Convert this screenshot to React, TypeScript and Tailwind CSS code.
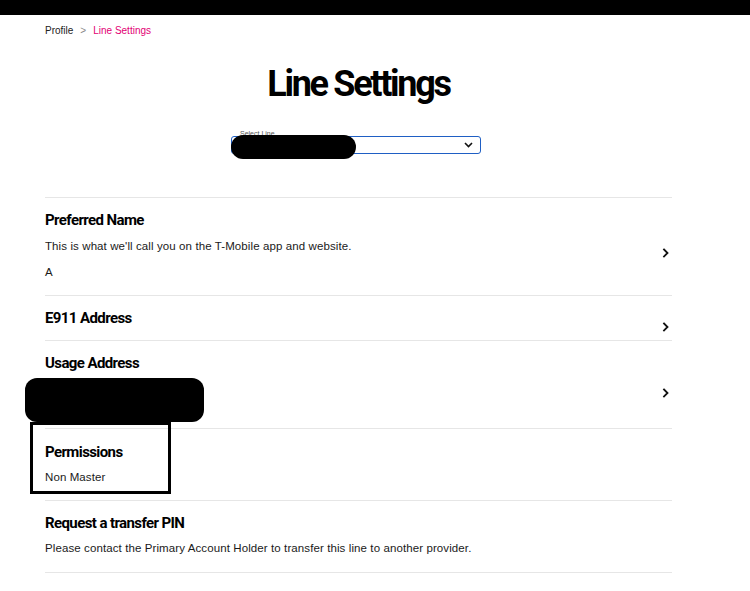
import React from 'react';

const heading = "font-['Roboto',sans-serif] text-[15px] font-bold leading-[20px] tracking-[-0.6px] text-black";
const body = "font-['Liberation_Sans',Arial,sans-serif] text-[11.5px] leading-[16px] tracking-[0.1px] text-[#1a1a1a]";

function Chevron() {
  return (
    <svg width="8" height="10" viewBox="0 0 8 10" fill="none">
      <path d="M2 1.5 L5.5 5 L2 8.5" stroke="#111" strokeWidth="1.8" strokeLinecap="square" />
    </svg>
  );
}

function Row({ children, chevron, className }: { children: React.ReactNode; chevron?: boolean; className: string }) {
  return (
    <div className={`flex items-center justify-between border-t border-[#e6e6e6] ${className}`}>
      <div>{children}</div>
      {chevron && (
        <div className="pt-[17px] pr-[2px]">
          <Chevron />
        </div>
      )}
    </div>
  );
}

export default function App() {
  return (
    <div className="min-h-[591px] bg-white">
      <div className="h-[15px] bg-black" />
      <div className="ml-[45px] w-[627px]">
        <nav className="mt-[9px] flex items-center gap-[7px] font-['Liberation_Sans',Arial,sans-serif] text-[10px] leading-[13px]">
          <span className="text-[#222]">Profile</span>
          <span className="text-[#888]">&gt;</span>
          <span className="text-[#e20074]">Line Settings</span>
        </nav>

        <h1 className="mt-[27px] text-center font-['Roboto',sans-serif] text-[36px] font-bold leading-[40px] tracking-[-2.3px] text-black">
          Line Settings
        </h1>

        <div className="mt-[26px] flex justify-center pr-[5px]">
          <div className="relative w-[250px]">
            <div className="pl-[9px] font-['Liberation_Sans',Arial,sans-serif] text-[7px] leading-[8px] text-[#555]">
              Select Line
            </div>
            <div className="mt-[-2px] flex h-[18px] items-center justify-end rounded-[3px] border-[1.5px] border-[#1f5fc4] pr-[7px]">
              <svg width="9" height="6" viewBox="0 0 9 6" fill="none">
                <path d="M1 1 L4.5 4.5 L8 1" stroke="#111" strokeWidth="1.6" />
              </svg>
            </div>
            <div className="absolute left-0 top-[5px] h-[24px] w-[125px] rounded-full bg-black" />
          </div>
        </div>

        <div className="mt-[43px]">
          <Row chevron className="h-[98px] pb-[4px]">
            <h2 className={heading}>Preferred Name</h2>
            <p className={`${body} mt-[8px]`}>This is what we'll call you on the T-Mobile app and website.</p>
            <p className={`${body} mt-[10px]`}>A</p>
          </Row>

          <Row chevron className="h-[45px]">
            <h2 className={heading}>E911 Address</h2>
          </Row>

          <Row chevron className="h-[88px]">
            <div className="pt-[6px]">
              <h2 className={heading}>Usage Address</h2>
              <div className="ml-[-20px] mt-[5px] h-[44px] w-[179px] rounded-[12px] bg-black" />
            </div>
          </Row>

          <div className="relative flex h-[72px] flex-col justify-center border-t border-[#e6e6e6]">
            <h2 className={`${heading} mt-[-3px]`}>Permissions</h2>
            <p className={`${body} mt-[7px]`}>Non Master</p>
            <div className="absolute left-[-15px] top-[-7px] h-[72px] w-[141px] border-[3px] border-black" />
          </div>

          <div className="flex h-[72px] flex-col justify-center border-t border-[#e6e6e6]">
            <h2 className={`${heading} mt-[-4px]`}>Request a transfer PIN</h2>
            <p className={`${body} mt-[7px]`}>Please contact the Primary Account Holder to transfer this line to another provider.</p>
          </div>
          <div className="border-t border-[#e6e6e6]" />
        </div>
      </div>
    </div>
  );
}
